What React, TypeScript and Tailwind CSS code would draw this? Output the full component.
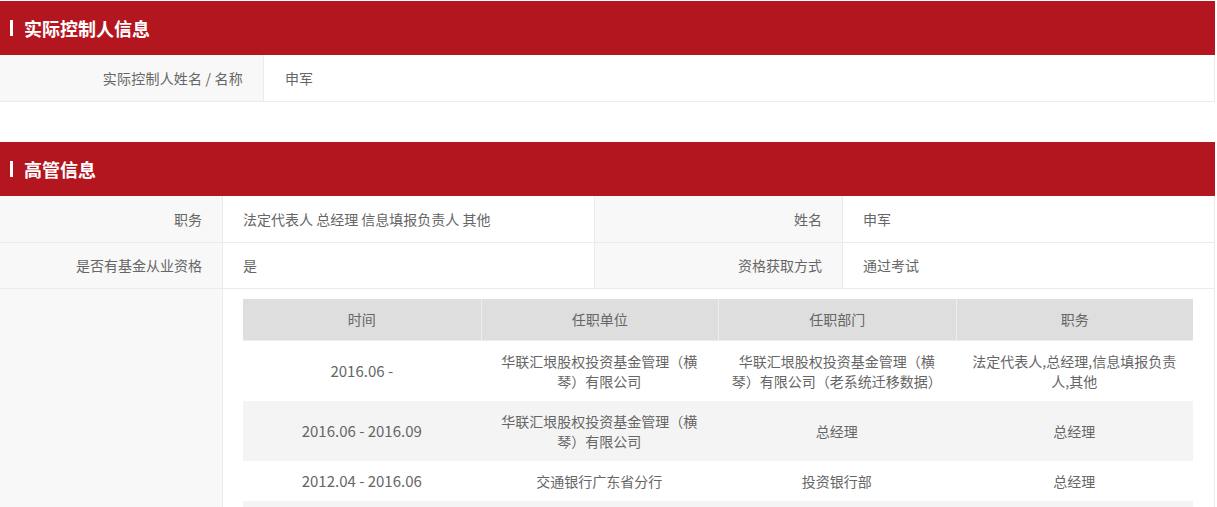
import React from "react";

const font = { fontFamily: '"Noto Sans CJK SC", "Noto Sans", sans-serif' };

function Title({ text }: { text: string }) {
  return (
    <div className="h-[54px] bg-[#b41620] flex items-center pl-[10px]">
      <span className="w-[3px] h-[16px] bg-white mr-[11px]" />
      <span className="text-white text-[18px] font-bold leading-none">{text}</span>
    </div>
  );
}

type Row = { time: string; unit: React.ReactNode; dept: React.ReactNode; pos: React.ReactNode };

const rows: Row[] = [
  {
    time: "2016.06 -",
    unit: (<>华联汇垠股权投资基金管理（横<br />琴）有限公司</>),
    dept: (<>华联汇垠股权投资基金管理（横<br />琴）有限公司（老系统迁移数据）</>),
    pos: (<>法定代表人,总经理,信息填报负责<br />人,其他</>),
  },
  {
    time: "2016.06 - 2016.09",
    unit: (<>华联汇垠股权投资基金管理（横<br />琴）有限公司</>),
    dept: "总经理",
    pos: "总经理",
  },
  { time: "2012.04 - 2016.06", unit: "交通银行广东省分行", dept: "投资银行部", pos: "总经理" },
];

export default function App() {
  return (
    <div className="bg-white w-[1217px] h-[507px] overflow-hidden pt-px text-[14px] text-[#666]" style={font}>
      <div className="w-[1215px]">
        <Title text="实际控制人信息" />
        <div className="flex h-[47px] border-b border-r border-[#ebebeb]">
          <div className="w-[264px] bg-[#f8f8f8] border-r border-[#ebebeb] flex items-center justify-end pr-[20px] tracking-[0.2px]">实际控制人姓名 / 名称</div>
          <div className="flex-1 flex items-center pl-[21px]">申军</div>
        </div>
        <div className="h-[40px]" />
        <Title text="高管信息" />
        <div className="flex h-[47px] border-b border-r border-[#ebebeb]">
          <div className="w-[223px] bg-[#f8f8f8] border-r border-[#ebebeb] flex items-center justify-end pr-[20px]">职务</div>
          <div className="w-[372px] border-r border-[#ebebeb] flex items-center pl-[20px]">法定代表人 总经理 信息填报负责人 其他</div>
          <div className="w-[248px] bg-[#f8f8f8] border-r border-[#ebebeb] flex items-center justify-end pr-[20px]">姓名</div>
          <div className="flex-1 flex items-center pl-[20px]">申军</div>
        </div>
        <div className="flex h-[46px] border-b border-r border-[#ebebeb]">
          <div className="w-[223px] bg-[#f8f8f8] border-r border-[#ebebeb] flex items-center justify-end pr-[20px]">是否有基金从业资格</div>
          <div className="w-[372px] border-r border-[#ebebeb] flex items-center pl-[20px]">是</div>
          <div className="w-[248px] bg-[#f8f8f8] border-r border-[#ebebeb] flex items-center justify-end pr-[20px]">资格获取方式</div>
          <div className="flex-1 flex items-center pl-[20px]">通过考试</div>
        </div>
        <div className="flex border-r border-[#ebebeb]">
          <div className="w-[223px] bg-[#f8f8f8] border-r border-[#ebebeb] shrink-0" />
          <div className="flex-1 pt-[10px] pl-[20px] pr-[20px]">
            <div className="w-[950px]">
              <div className="grid grid-cols-4 h-[42px] bg-[#dedede] border-b border-[#eeeeee]">
                {["时间", "任职单位", "任职部门", "职务"].map((h, i) => (
                  <div key={h} className={"flex items-center justify-center " + (i > 0 ? "border-l border-[#eeeeee]" : "")}>{h}</div>
                ))}
              </div>
              {rows.map((r, i) => (
                <div key={i} className={"grid grid-cols-4 " + (i % 2 === 1 ? "bg-[#f4f4f4]" : "bg-white")}>
                  <div className="flex items-center justify-center text-center py-[10px] px-[6px] leading-[20px] text-[15px]">{r.time}</div>
                  {[r.unit, r.dept, r.pos].map((c, j) => (
                    <div key={j} className="flex items-center justify-center text-center py-[10px] px-[6px] leading-[20px] whitespace-nowrap">{c}</div>
                  ))}
                </div>
              ))}
              <div className="h-[40px] bg-[#f4f4f4]" />
            </div>
          </div>
        </div>
      </div>
    </div>
  );
}
